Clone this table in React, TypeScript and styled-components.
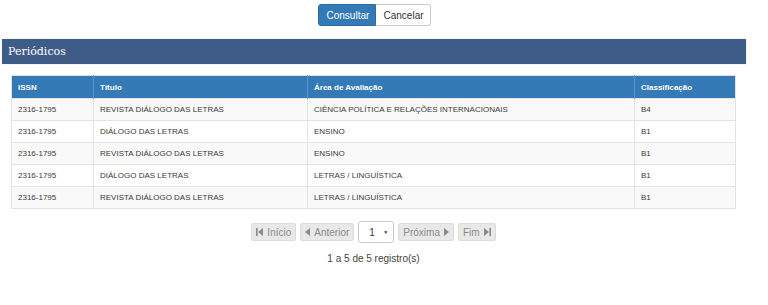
import styled, { createGlobalStyle } from 'styled-components'

const GlobalStyle = createGlobalStyle`
  html, body {
    margin: 0;
    padding: 0;
    background: #fff;
    font-family: 'Liberation Sans', Arial, sans-serif;
  }
`

type Periodico = {
  issn: string
  titulo: string
  area: string
  classificacao: string
}

const periodicos: Periodico[] = [
  { issn: '2316-1795', titulo: 'REVISTA DIÁLOGO DAS LETRAS', area: 'CIÊNCIA POLÍTICA E RELAÇÕES INTERNACIONAIS', classificacao: 'B4' },
  { issn: '2316-1795', titulo: 'DIÁLOGO DAS LETRAS', area: 'ENSINO', classificacao: 'B1' },
  { issn: '2316-1795', titulo: 'REVISTA DIÁLOGO DAS LETRAS', area: 'ENSINO', classificacao: 'B1' },
  { issn: '2316-1795', titulo: 'DIÁLOGO DAS LETRAS', area: 'LETRAS / LINGUÍSTICA', classificacao: 'B1' },
  { issn: '2316-1795', titulo: 'REVISTA DIÁLOGO DAS LETRAS', area: 'LETRAS / LINGUÍSTICA', classificacao: 'B1' },
]

const FirstIcon = () => (
  <svg width="7" height="8" viewBox="0 0 7 8">
    <rect x="0" y="0" width="1.6" height="8" fill="currentColor" />
    <path d="M7 0 L2 4 L7 8 Z" fill="currentColor" />
  </svg>
)

const PrevIcon = () => (
  <svg width="5" height="8" viewBox="0 0 5 8">
    <path d="M5 0 L0 4 L5 8 Z" fill="currentColor" />
  </svg>
)

const NextIcon = () => (
  <svg width="5" height="8" viewBox="0 0 5 8">
    <path d="M0 0 L5 4 L0 8 Z" fill="currentColor" />
  </svg>
)

const LastIcon = () => (
  <svg width="7" height="8" viewBox="0 0 7 8">
    <path d="M0 0 L5 4 L0 8 Z" fill="currentColor" />
    <rect x="5.4" y="0" width="1.6" height="8" fill="currentColor" />
  </svg>
)

export default function App() {
  return (
    <Page>
      <GlobalStyle />
      <Actions>
        <PrimaryButton>Consultar</PrimaryButton>
        <DefaultButton>Cancelar</DefaultButton>
      </Actions>

      <Panel>
        <PanelHeading>Periódicos</PanelHeading>
        <PanelBody>
          <Table>
            <colgroup>
              <col style={{ width: 82 }} />
              <col style={{ width: 214 }} />
              <col style={{ width: 327 }} />
              <col />
            </colgroup>
            <thead>
              <tr>
                <Th>ISSN</Th>
                <Th>Título</Th>
                <Th>Área de Avaliação</Th>
                <Th>Classificação</Th>
              </tr>
            </thead>
            <tbody>
              {periodicos.map((p, i) => (
                <Row key={i} $striped={i % 2 === 0}>
                  <Td>{p.issn}</Td>
                  <Td>{p.titulo}</Td>
                  <Td>{p.area}</Td>
                  <Td>{p.classificacao}</Td>
                </Row>
              ))}
            </tbody>
          </Table>

          <Pager>
            <PageButton>
              <FirstIcon /> Início
            </PageButton>
            <PageButton>
              <PrevIcon /> Anterior
            </PageButton>
            <PageSelect>
              <span>1</span>
              <Caret>▼</Caret>
            </PageSelect>
            <PageButton>
              Próxima
              <NextIcon />
            </PageButton>
            <PageButton>
              Fim
              <LastIcon />
            </PageButton>
          </Pager>
          <Summary>1 a 5 de 5 registro(s)</Summary>
        </PanelBody>
      </Panel>
    </Page>
  )
}

const Page = styled.div`
  width: 768px;
  height: 305px;
  overflow: hidden;
  padding: 4px 22px 0 2px;
  box-sizing: border-box;
`

const Actions = styled.div`
  display: flex;
  justify-content: center;
  height: 22px;
`

const BaseButton = styled.button`
  font-family: 'Liberation Sans', Arial, sans-serif;
  font-size: 10px;
  height: 22px;
  padding: 0 8px;
  border: 1px solid;
  cursor: pointer;
  margin: 0;
`

const PrimaryButton = styled(BaseButton)`
  background: #337ab7;
  border-color: #2e6da4;
  color: #fff;
  border-radius: 3px 0 0 3px;
  width: 58px;
`

const DefaultButton = styled(BaseButton)`
  background: #fff;
  border-color: #ccc;
  border-left: none;
  color: #333;
  border-radius: 0 3px 3px 0;
  width: 55px;
`

const Panel = styled.section`
  margin-top: 13px;
`

const PanelHeading = styled.h2`
  margin: 0;
  height: 25px;
  line-height: 25px;
  padding: 0 6px;
  background: #3f5b87;
  color: #fff;
  font-family: 'DejaVu Serif', 'Liberation Serif', serif;
  font-weight: normal;
  font-size: 11px;
  box-shadow: 0 0 1px rgba(0, 0, 0, 0.2);
`

const PanelBody = styled.div`
  padding: 11px 10px 0 9px;
`

const Table = styled.table`
  width: 725px;
  border-collapse: collapse;
  table-layout: fixed;
  font-size: 8px;
  color: #3a3a3a;
  border: 1px solid #e2e2e2;
`

const Th = styled.th`
  background: #337ab7;
  color: #fff;
  text-align: left;
  font-weight: bold;
  height: 22px;
  padding: 0 6px;
  border-left: 1px solid #5d97c9;
  &:first-child {
    border-left: none;
  }
`

const Row = styled.tr<{ $striped: boolean }>`
  background: ${({ $striped }) => ($striped ? '#f9f9f9' : '#fff')};
`

const Td = styled.td`
  height: 21px;
  padding: 0 6px;
  border-top: 1px solid #e4e4e4;
  border-left: 1px solid #e4e4e4;
  white-space: nowrap;
`

const Pager = styled.div`
  display: flex;
  justify-content: center;
  align-items: center;
  gap: 4px;
  margin-top: 12px;
`

const PageButton = styled.span`
  display: inline-flex;
  align-items: center;
  gap: 4px;
  height: 18px;
  padding: 0 4px;
  background: #e8e8e8;
  border: 1px solid #dcdcdc;
  border-radius: 2px;
  color: #8a8a8a;
  font-size: 10px;
  box-sizing: border-box;
`

const PageSelect = styled.span`
  display: inline-flex;
  align-items: center;
  justify-content: space-between;
  width: 36px;
  height: 22px;
  padding: 0 5px 0 10px;
  box-sizing: border-box;
  background: #fff;
  border: 1px solid #ccc;
  border-radius: 3px;
  font-size: 10px;
  color: #333;
`

const Caret = styled.span`
  font-size: 5px;
`

const Summary = styled.div`
  text-align: center;
  font-size: 10px;
  color: #444;
  margin-top: 10px;
`
